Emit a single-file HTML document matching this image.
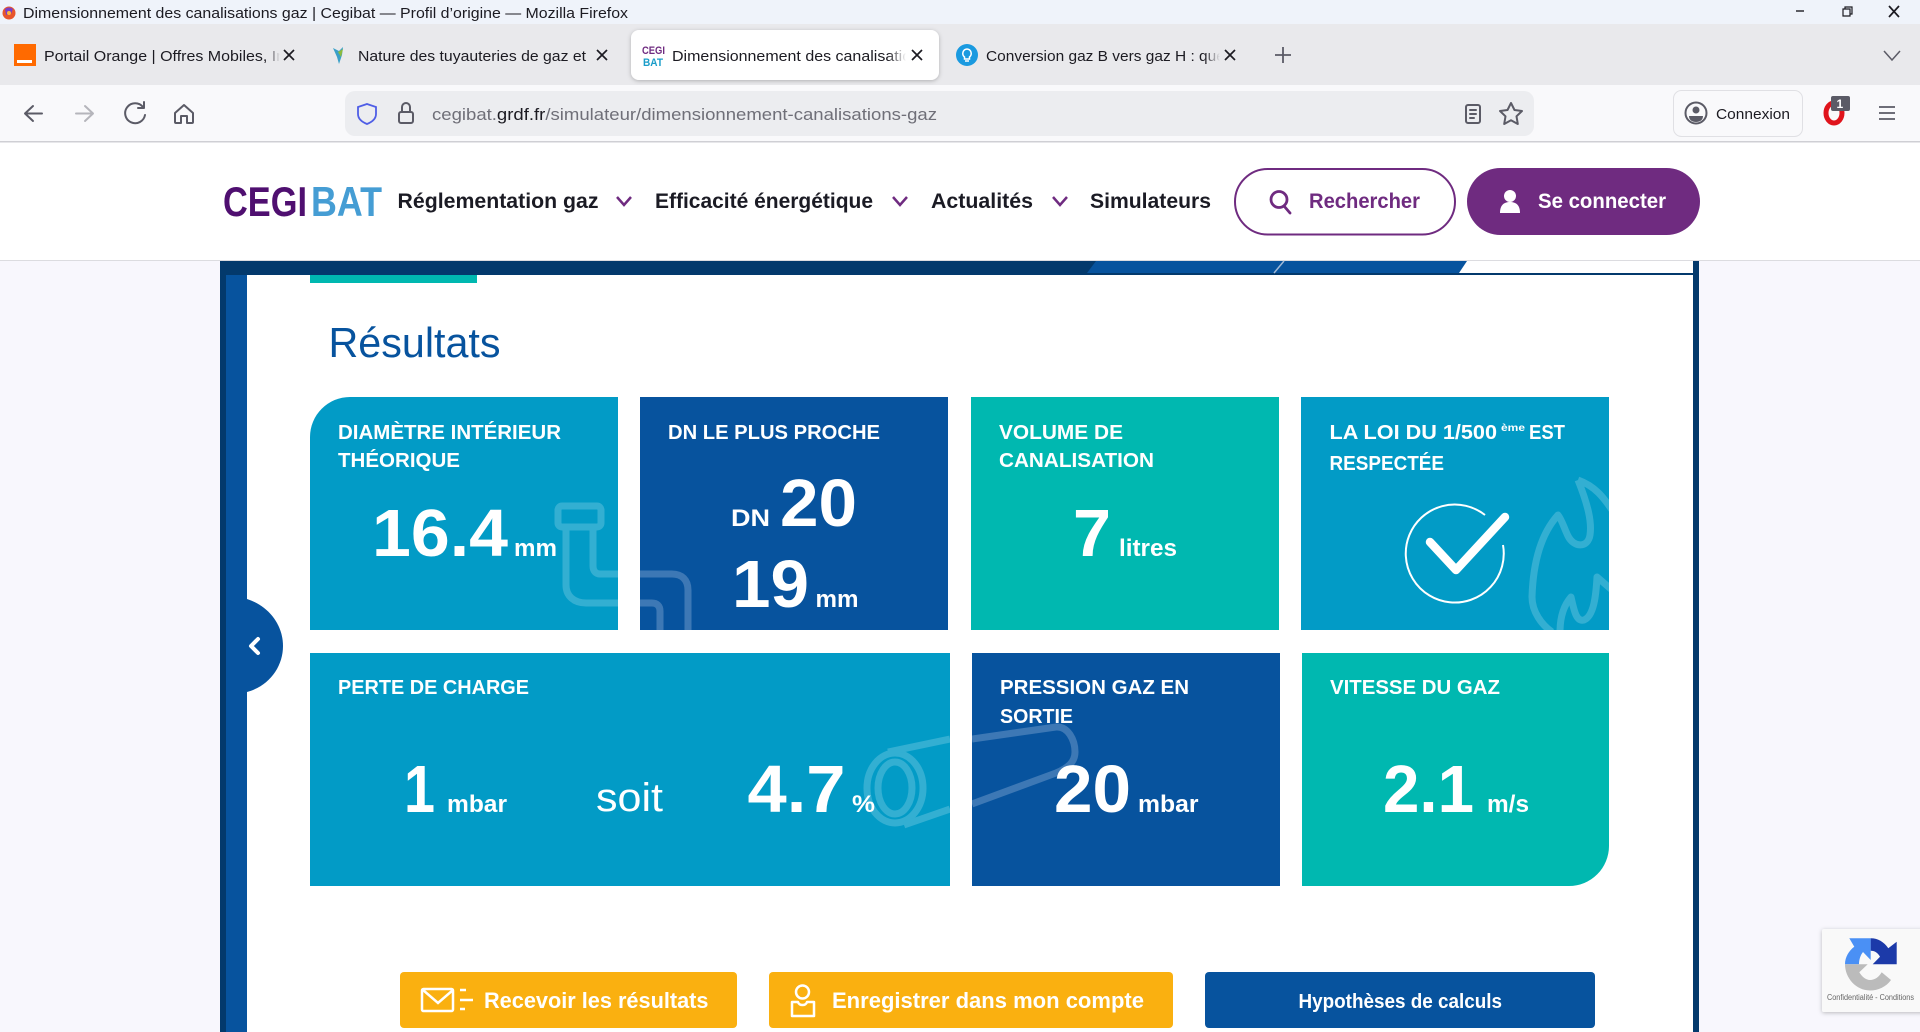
<!DOCTYPE html>
<html lang="fr">
<head>
<meta charset="utf-8">
<title>Dimensionnement des canalisations gaz | Cegibat</title>
<style>
html,body{margin:0;padding:0;width:1920px;height:1032px;overflow:hidden;background:#f8f7fd}
svg{display:block;position:absolute;left:0;top:0}
text{font-family:"Liberation Sans",sans-serif;white-space:pre}
.ui{font-size:15px;fill:#1c1b22}
.nav{font-size:21px;font-weight:700;fill:#1b1b24}
.t{font-size:20px;font-weight:700;fill:#fff}
.big{font-size:67px;font-weight:700;fill:#fff}
.u{font-size:24px;font-weight:700;fill:#fff}
.b{font-size:22px;font-weight:700;fill:#fff}
.ic{fill:none;stroke:#5b5b66;stroke-width:2;stroke-linecap:round;stroke-linejoin:round}
.x{fill:none;stroke:#1c1b22;stroke-width:1.7}
.pale{fill:none;stroke:#33afd2;stroke-width:7;stroke-linejoin:round}
.palen{fill:none;stroke:#3d78b5;stroke-width:7;stroke-linejoin:round}
</style>
</head>
<body>
<svg width="1920" height="1032" viewBox="0 0 1920 1032" xmlns="http://www.w3.org/2000/svg">
<defs>
<linearGradient id="fg" x1="0" x2="1" y1="0" y2="0"><stop offset="0" stop-color="#e9e9ec" stop-opacity="0"/><stop offset="1" stop-color="#e9e9ec"/></linearGradient>
<linearGradient id="fw" x1="0" x2="1" y1="0" y2="0"><stop offset="0" stop-color="#fff" stop-opacity="0"/><stop offset="1" stop-color="#fff"/></linearGradient>
<filter id="sh" x="-20%" y="-20%" width="140%" height="140%"><feDropShadow dx="0" dy="1" stdDeviation="2" flood-color="#000" flood-opacity=".25"/></filter>
<clipPath id="c1"><path d="M350 397H618V630H310V437A40 40 0 0 1 350 397Z"/></clipPath>
<clipPath id="c2"><rect x="640" y="397" width="308" height="233"/></clipPath>
<clipPath id="c4"><rect x="1301" y="397" width="308" height="233"/></clipPath>
<clipPath id="c5"><rect x="310" y="653" width="640" height="233"/></clipPath>
<clipPath id="c6"><rect x="972" y="653" width="308" height="233"/></clipPath>
</defs>

<!-- Title bar -->
<rect width="1920" height="24" fill="#eff3fa"/>
<circle cx="9" cy="13" r="6.500" fill="#e8552c"/><path d="M5 9a6 6 0 0 1 8 0l-2 5-5 1z" fill="#7a3fc4"/><circle cx="9" cy="13" r="2" fill="#ffb33a"/>
<text class="ui" x="23" y="18" textLength="605" lengthAdjust="spacingAndGlyphs">Dimensionnement des canalisations gaz | Cegibat — Profil d’origine — Mozilla Firefox</text>
<path d="M1796 11h8" stroke="#1c1b22" stroke-width="1.400"/>
<path d="M1843 9h7v7h-7zM1845 9V7h7v7h-2" fill="none" stroke="#1c1b22" stroke-width="1.200"/>
<path d="M1889 6l10 11M1899 6l-10 11" class="x" stroke-width="1.200"/>

<!-- Tab bar -->
<rect y="24" width="1920" height="61" fill="#e9e9ec"/>
<rect x="14" y="44" width="22" height="22" fill="#ff6a00"/><rect x="17" y="60" width="15" height="3" fill="#fff"/>
<text class="ui" x="44" y="61" textLength="282" lengthAdjust="spacingAndGlyphs">Portail Orange | Offres Mobiles, Internet</text>
<rect x="266" y="42" width="14" height="26" fill="url(#fg)"/>
<rect x="280" y="42" width="50" height="26" fill="#e9e9ec"/>
<path d="M284 50l10 10M294 50l-10 10" class="x"/>
<path d="M333 48l6 3 4-4-1 8-3 9-2-7z" fill="#3aa0c8"/><path d="M338 52l5-3-2 8z" fill="#8dbb3c"/>
<text class="ui" x="358" y="61" textLength="228" lengthAdjust="spacingAndGlyphs">Nature des tuyauteries de gaz et</text>
<path d="M597 50l10 10M607 50l-10 10" class="x"/>

<rect x="631" y="30" width="308" height="50" rx="8" fill="#fff" filter="url(#sh)"/>
<text x="642" y="54" font-size="11" font-weight="700" fill="#6f2b80" textLength="23" lengthAdjust="spacingAndGlyphs">CEGI</text>
<text x="643" y="66" font-size="11" font-weight="700" fill="#1a9dc9" textLength="20" lengthAdjust="spacingAndGlyphs">BAT</text>
<text class="ui" x="672" y="61" textLength="256" lengthAdjust="spacingAndGlyphs">Dimensionnement des canalisations</text>
<rect x="888" y="42" width="18" height="26" fill="url(#fw)"/>
<rect x="906" y="42" width="26" height="26" fill="#fff"/>
<path d="M912 50l10 10M922 50l-10 10" class="x"/>

<circle cx="967" cy="55" r="11" fill="#1a9ae0"/>
<path d="M967 49a4.500 4.500 0 0 1 2.500 8v2h-5v-2a4.500 4.500 0 0 1 2.500-8z" fill="none" stroke="#fff" stroke-width="1.500"/><path d="M965 61h4" stroke="#fff" stroke-width="1.500"/>
<text class="ui" x="986" y="61" textLength="250" lengthAdjust="spacingAndGlyphs">Conversion gaz B vers gaz H : quels</text>
<rect x="1204" y="42" width="16" height="26" fill="url(#fg)"/>
<rect x="1220" y="42" width="20" height="26" fill="#e9e9ec"/>
<path d="M1225 50l10 10M1235 50l-10 10" class="x"/>
<path d="M1283 47v16M1275 55h16" stroke="#5b5b66" stroke-width="1.800"/>
<path d="M1884 51l8 9 8-9" fill="none" stroke="#5b5b66" stroke-width="1.500"/>

<!-- Nav toolbar -->
<rect y="85" width="1920" height="56" fill="#f9f9fb"/>
<rect y="141" width="1920" height="1.500" fill="#cfcfd4"/>
<path d="M42 113.500H25M33 106l-8 7.500 8 7.500" class="ic"/>
<path d="M76 113.500h17M85 106l8 7.500-8 7.500" class="ic" style="stroke:#b5b5bb"/>
<path d="M143 107a10 10 0 1 0 2 8" class="ic"/><path d="M144 102v6h-6" class="ic"/>
<path d="M175 113l9-8 9 8v9a1 1 0 0 1-1 1h-5v-7h-6v7h-5a1 1 0 0 1-1-1z" class="ic"/>
<rect x="345" y="91" width="1189" height="45" rx="10" fill="#ecedf0"/>
<path d="M367 104l9 3v7c0 5-4 8-9 10-5-2-9-5-9-10v-7z" fill="none" stroke="#4f5ee6" stroke-width="1.800"/>
<rect x="399" y="112" width="14" height="11" rx="2" class="ic"/><path d="M402 112v-5a4 4 0 0 1 8 0v5" class="ic"/>
<text x="432" y="120" font-size="16.500" fill="#6f6f78" textLength="505" lengthAdjust="spacingAndGlyphs">cegibat.<tspan fill="#1c1b22">grdf.fr</tspan>/simulateur/dimensionnement-canalisations-gaz</text>
<rect x="1466" y="105" width="14" height="18" rx="2" class="ic"/><path d="M1470 110h6M1470 114h6M1470 118h4" class="ic" stroke-width="1.500"/>
<path d="M1511 103l3.500 7 7.500 1-5.500 5.300 1.300 7.700-6.800-3.700-6.800 3.700 1.300-7.700L1500 111l7.500-1z" class="ic"/>
<rect x="1673.500" y="90.500" width="129" height="46" rx="8" fill="#f9f9fb" stroke="#e0e0e4"/>
<circle cx="1696" cy="113" r="10.500" class="ic"/><circle cx="1696" cy="110" r="3.500" fill="#5b5b66"/><path d="M1689 116h14c0 4-3 6-7 6s-7-2-7-6z" fill="#5b5b66"/>
<text class="ui" x="1716" y="119" textLength="74" lengthAdjust="spacingAndGlyphs">Connexion</text>
<ellipse cx="1834" cy="113" rx="8" ry="10" fill="none" stroke="#e0141c" stroke-width="5"/>
<rect x="1831" y="96" width="19" height="15" rx="2" fill="#5b5b66"/>
<text x="1836.500" y="108" font-size="12" font-weight="700" fill="#fff">1</text>
<path d="M1879 107h16M1879 113h16M1879 119h16" stroke="#5b5b66" stroke-width="1.800"/>

<!-- Site header -->
<rect y="142.500" width="1920" height="118" fill="#fff"/>
<rect y="260" width="1920" height="1" fill="#dcdce0"/>
<text x="223" y="216" font-size="42" font-weight="700" fill="#4f0f70" textLength="84" lengthAdjust="spacingAndGlyphs">CEGI</text>
<text x="311" y="216" font-size="42" font-weight="700" fill="#459dd4" textLength="71" lengthAdjust="spacingAndGlyphs">BAT</text>
<text class="nav" x="397.500" y="208" textLength="201" lengthAdjust="spacingAndGlyphs">Réglementation gaz</text>
<path d="M617 197l7 8 7-8" fill="none" stroke="#6f2b80" stroke-width="2.500"/>
<text class="nav" x="655" y="208" textLength="218" lengthAdjust="spacingAndGlyphs">Efficacité énergétique</text>
<path d="M893 197l7 8 7-8" fill="none" stroke="#6f2b80" stroke-width="2.500"/>
<text class="nav" x="931" y="208" textLength="102" lengthAdjust="spacingAndGlyphs">Actualités</text>
<path d="M1053 197l7 8 7-8" fill="none" stroke="#6f2b80" stroke-width="2.500"/>
<text class="nav" x="1090" y="208" textLength="121" lengthAdjust="spacingAndGlyphs">Simulateurs</text>
<rect x="1235" y="169" width="220" height="65.500" rx="32.700" fill="#fff" stroke="#6f2b80" stroke-width="2"/>
<circle cx="1279" cy="199.500" r="8" fill="none" stroke="#6f2b80" stroke-width="2.800"/><path d="M1284 206l6 7" stroke="#6f2b80" stroke-width="2.800" stroke-linecap="round"/>
<text class="nav" x="1309" y="208" style="fill:#6f2b80" textLength="111" lengthAdjust="spacingAndGlyphs">Rechercher</text>
<rect x="1467" y="168" width="233" height="67" rx="33.500" fill="#6f2b80"/>
<ellipse cx="1510" cy="196" rx="6" ry="6" fill="#fff"/><path d="M1500 213c0-8 4-11 10-11s10 3 10 11z" fill="#fff"/>
<text class="nav" x="1538" y="208" style="fill:#fff" textLength="128" lengthAdjust="spacingAndGlyphs">Se connecter</text>

<!-- Main container -->
<rect x="220" y="261" width="1479" height="771" fill="#03396c"/>
<rect x="226" y="275" width="21" height="757" fill="#07539e"/>
<rect x="247" y="275" width="1446" height="757" fill="#fff"/>
<rect x="1450" y="261" width="243" height="12" fill="#fff"/>
<path d="M1087 273L1096 261H1467L1459 273Z" fill="#07539e"/>
<path d="M1274 273L1284 261" stroke="#9fb8d6" stroke-width="1.500"/>
<rect x="310" y="275" width="167" height="8" fill="#00b8b0"/>
<text x="328.500" y="357" font-size="42" fill="#07539e" textLength="172" lengthAdjust="spacingAndGlyphs">Résultats</text>

<!-- Side toggle -->
<path d="M247 599C269 606 283 625 283 646C283 667 269 686 247 692Z" fill="#07539e"/>
<path d="M258 639l-7 7 7 7" fill="none" stroke="#fff" stroke-width="4" stroke-linecap="round" stroke-linejoin="round"/>

<!-- Row 1 -->
<path d="M350 397H618V630H310V437A40 40 0 0 1 350 397Z" fill="#029bc6"/>
<g clip-path="url(#c1)" class="pale">
<rect x="558" y="506" width="43" height="21" rx="4"/>
<path d="M566 530V585C566 596 574 603 586 603H618M593 530V566C593 571 596 574 600 574H618"/>
</g>
<rect x="640" y="397" width="308" height="233" fill="#07539e"/>
<g clip-path="url(#c2)" class="palen">
<path d="M640 574H672C682 574 688 580 688 590V630M640 603H652C657 603 660 606 660 611V630"/>
</g>
<rect x="971" y="397" width="308" height="233" fill="#00b8b0"/>
<rect x="1301" y="397" width="308" height="233" fill="#029bc6"/>
<g clip-path="url(#c4)" class="pale">
<path d="M1578 480C1595 486 1604 498 1612 510M1578 480C1588 505 1592 522 1590 535C1588 548 1574 548 1568 536C1564 528 1562 520 1558 515C1540 535 1533 565 1532 597C1532 612 1542 625 1552 632"/>
<path d="M1560 632C1560 615 1565 604 1571 597C1574 610 1576 622 1584 620C1594 616 1596 595 1597 577L1612 590"/>
</g>
<path d="M1503 545A49 49 0 1 1 1485 515" fill="none" stroke="#fff" stroke-width="2"/>
<path d="M1430 542L1456 570L1505 517" fill="none" stroke="#fff" stroke-width="8.500" stroke-linecap="round" stroke-linejoin="round"/>

<text class="t" x="338" y="439" textLength="223" lengthAdjust="spacingAndGlyphs">DIAMÈTRE INTÉRIEUR</text>
<text class="t" x="338" y="467" textLength="122" lengthAdjust="spacingAndGlyphs">THÉORIQUE</text>
<text class="big" x="372" y="556" textLength="136" lengthAdjust="spacingAndGlyphs">16.4</text>
<text class="u" x="514" y="556" textLength="43" lengthAdjust="spacingAndGlyphs">mm</text>

<text class="t" x="668" y="439" textLength="212" lengthAdjust="spacingAndGlyphs">DN LE PLUS PROCHE</text>
<text class="u" x="731" y="526" textLength="39" lengthAdjust="spacingAndGlyphs">DN</text>
<text class="big" x="780" y="526" textLength="77" lengthAdjust="spacingAndGlyphs">20</text>
<text class="big" x="732" y="607" textLength="77" lengthAdjust="spacingAndGlyphs">19</text>
<text class="u" x="815.500" y="607" textLength="43" lengthAdjust="spacingAndGlyphs">mm</text>

<text class="t" x="999" y="439" textLength="124" lengthAdjust="spacingAndGlyphs">VOLUME DE</text>
<text class="t" x="999" y="467" textLength="155" lengthAdjust="spacingAndGlyphs">CANALISATION</text>
<text class="big" x="1073" y="556" textLength="38" lengthAdjust="spacingAndGlyphs">7</text>
<text class="u" x="1119" y="556" textLength="58" lengthAdjust="spacingAndGlyphs">litres</text>

<text class="t" x="1329.500" y="439" textLength="167.500" lengthAdjust="spacingAndGlyphs">LA LOI DU 1/500</text>
<text x="1501" y="431" font-size="10" font-weight="700" fill="#fff" textLength="24" lengthAdjust="spacingAndGlyphs">ème</text>
<text class="t" x="1529" y="439" textLength="36" lengthAdjust="spacingAndGlyphs">EST</text>
<text class="t" x="1329.500" y="470" textLength="114.500" lengthAdjust="spacingAndGlyphs">RESPECTÉE</text>

<!-- Row 2 -->
<rect x="310" y="653" width="640" height="233" fill="#029bc6"/>
<g clip-path="url(#c5)" class="pale">
<ellipse cx="895" cy="788" rx="28" ry="35"/>
<ellipse cx="895" cy="788" rx="17" ry="26"/>
<path d="M888 752L950 739M904 825L950 809"/>
</g>
<rect x="972" y="653" width="308" height="233" fill="#07539e"/>
<g clip-path="url(#c6)" class="palen">
<path d="M972 739L1056 727C1068 726 1075 740 1075 752C1075 762 1068 768 1056 773L972 804"/>
</g>
<path d="M1302 653H1609V846A40 40 0 0 1 1569 886H1302Z" fill="#00b8b0"/>

<text class="t" x="338" y="694" textLength="191" lengthAdjust="spacingAndGlyphs">PERTE DE CHARGE</text>
<text class="big" x="404" y="812" textLength="31" lengthAdjust="spacingAndGlyphs">1</text>
<text class="u" x="447" y="812" textLength="60" lengthAdjust="spacingAndGlyphs">mbar</text>
<text x="596" y="811" font-size="40" fill="#fff" textLength="67" lengthAdjust="spacingAndGlyphs">soit</text>
<text class="big" x="747.500" y="812" textLength="98" lengthAdjust="spacingAndGlyphs">4.7</text>
<text class="u" x="852" y="812" textLength="23" lengthAdjust="spacingAndGlyphs">%</text>

<text class="t" x="1000" y="694" textLength="189" lengthAdjust="spacingAndGlyphs">PRESSION GAZ EN</text>
<text class="t" x="1000" y="723" textLength="73" lengthAdjust="spacingAndGlyphs">SORTIE</text>
<text class="big" x="1054" y="812" textLength="77" lengthAdjust="spacingAndGlyphs">20</text>
<text class="u" x="1138" y="812" textLength="60.500" lengthAdjust="spacingAndGlyphs">mbar</text>

<text class="t" x="1330" y="694" textLength="170" lengthAdjust="spacingAndGlyphs">VITESSE DU GAZ</text>
<text class="big" x="1383" y="812" textLength="91" lengthAdjust="spacingAndGlyphs">2.1</text>
<text class="u" x="1487" y="812" textLength="42" lengthAdjust="spacingAndGlyphs">m/s</text>

<!-- Buttons -->
<rect x="400" y="972" width="337" height="56" rx="4" fill="#fab010"/>
<rect x="422" y="989" width="31" height="22" rx="1.500" fill="none" stroke="#fff" stroke-width="2.500"/>
<path d="M423 990l15 13 15-13" fill="none" stroke="#fff" stroke-width="2.500"/>
<path d="M460 990h6M460 1000h13M460 1009h5" stroke="#fff" stroke-width="2.500"/>
<text class="b" x="484" y="1008" textLength="224.500" lengthAdjust="spacingAndGlyphs">Recevoir les résultats</text>

<rect x="769" y="972" width="404" height="56" rx="4" fill="#fab010"/>
<circle cx="802.500" cy="992" r="6.500" fill="none" stroke="#fff" stroke-width="2.500"/>
<path d="M792 1002h6c1 4 8 4 9 0h7v14h-22z" fill="none" stroke="#fff" stroke-width="2.500" stroke-linejoin="round"/>
<text class="b" x="832" y="1008" textLength="312" lengthAdjust="spacingAndGlyphs">Enregistrer dans mon compte</text>

<rect x="1205" y="972" width="390" height="56" rx="4" fill="#07539e"/>
<text x="1298.500" y="1008" font-size="20" font-weight="700" fill="#fff" textLength="203.500" lengthAdjust="spacingAndGlyphs">Hypothèses de calculs</text>

<!-- reCAPTCHA -->
<rect x="1822" y="929" width="104" height="83" rx="2" fill="#f9f9f9" filter="url(#sh)"/>
<path d="M1849.300 938.300H1870.700V960L1863 952C1860.500 955 1859 959.500 1859 964.300H1845C1845 957 1849 950.500 1854.300 946.700Z" fill="#4a90f5"/>
<path d="M1870.700 938.300C1878 938.300 1884 942 1888.300 948.300L1896.700 941.700V964.300H1872.700L1880 956.700C1878 953 1875 950.700 1870.700 950.700Z" fill="#1c3aa9"/>
<path d="M1845 964.300H1867.700L1859.300 972.300C1862 977 1866 980 1870 980C1875 980 1879 977 1881.700 972.300L1891 980C1886 987 1878 990.500 1870 990.500C1856 990.500 1845 978 1845 964.300Z" fill="#bbb"/>
<text x="1827" y="1000" font-size="8" fill="#666" textLength="87" lengthAdjust="spacingAndGlyphs">Confidentialité - Conditions</text>
</svg>
</body>
</html>
